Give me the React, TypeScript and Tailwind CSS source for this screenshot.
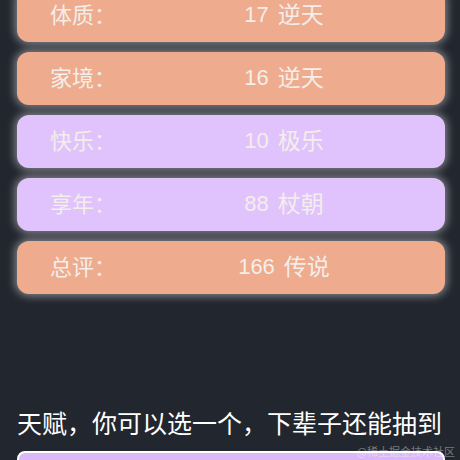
import React from "react";

type Row = {
  label: string;
  score: number;
  grade: string;
  tone: "orange" | "purple";
};

const rows: Row[] = [
  { label: "体质：", score: 17, grade: "逆天", tone: "orange" },
  { label: "家境：", score: 16, grade: "逆天", tone: "orange" },
  { label: "快乐：", score: 10, grade: "极乐", tone: "purple" },
  { label: "享年：", score: 88, grade: "杖朝", tone: "purple" },
  { label: "总评：", score: 166, grade: "传说", tone: "orange" },
];

const StatRow = ({ label, score, grade, tone }: Row) => (
  <div
    className={`flex h-[53px] items-center rounded-[12px] pl-[33px] pr-[33px] text-[22px] text-[#f3eeea] shadow-[0_0_8px_2px_rgba(255,255,255,0.45)] ${
      tone === "orange" ? "bg-[#eeab8d]" : "bg-[#e0c3fc]"
    }`}
  >
    <span className="w-[106px] shrink-0">{label}</span>
    <span className="flex flex-1 justify-center gap-[9px] text-[22px]">
      <span>{score}</span>
      <span className="text-[23px]">{grade}</span>
    </span>
  </div>
);

export default function App() {
  return (
    <div
      className="relative h-[460px] w-[460px] overflow-hidden bg-[#22262e]"
      style={{ fontFamily: '"Liberation Sans", "Noto Sans CJK SC", sans-serif' }}
    >
      <div className="mt-[-11px] flex flex-col gap-[10px] pl-[17px] pr-[15px]">
        {rows.map((r) => (
          <StatRow key={r.label} {...r} />
        ))}
      </div>

      <div className="mt-[113px] pl-[17px] pr-[15px]">
        <h2 className="h-[34px] text-[25px] leading-[34px] text-white">
          天赋，你可以选一个，下辈子还能抽到
        </h2>
        <div className="mt-[10px] h-[40px] rounded-[8px] border-2 border-white bg-[#dcb8f8]" />
      </div>

      <span
        className="absolute bottom-[1px] right-[5px] text-[11px] text-[#ffffff66]"
        style={{ fontFamily: '"Noto Sans CJK SC", serif' }}
      >
        @稀土掘金技术社区
      </span>
    </div>
  );
}
